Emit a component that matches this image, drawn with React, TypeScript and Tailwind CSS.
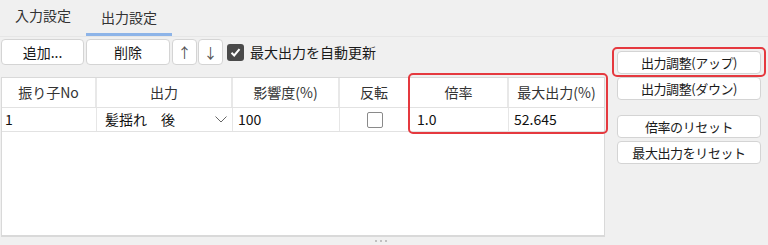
import React from 'react';

const font = { fontFamily: '"Noto Sans CJK JP", "Noto Sans", sans-serif' };

const columns = ['振り子No', '出力', '影響度(%)', '反転', '倍率', '最大出力(%)'];

function Btn({ label, className }: { label: string; className: string }) {
  return (
    <button
      className={`flex items-center justify-center rounded-[4px] border border-[#d4d4d4] bg-white text-[#1a1a1a] leading-none ${className}`}
    >
      {label}
    </button>
  );
}

export default function App() {
  return (
    <div
      className="relative flex h-[245px] w-[768px] flex-col overflow-hidden bg-[#f0f0f0] text-[#1a1a1a]"
      style={font}
    >
      {/* Tabs */}
      <div className="flex h-[37px] shrink-0 border-b border-[#e6e6e6]">
        <div className="flex w-[86px] items-center justify-center pb-[5px] text-[14px] text-[#333]">入力設定</div>
        <div className="flex w-[86px] flex-col">
          <div className="flex flex-1 items-center justify-center pt-[1px] text-[14px] text-[#333]">出力設定</div>
          <div className="h-[3px] bg-[#8db4e8]" />
        </div>
      </div>

      <div className="flex min-h-0 flex-1">
        {/* Left column */}
        <div className="flex w-[607px] flex-col">
          <div className="mt-[2px] flex h-[26px] items-center pl-[1px]">
            <Btn label="追加..." className="h-[26px] w-[83px] text-[14px]" />
            <Btn label="削除" className="ml-[2px] h-[26px] w-[84px] text-[14px]" />
            <Btn label="↑" className="ml-[2px] h-[26px] w-[25px] text-[14px] text-[#555]" />
            <Btn label="↓" className="ml-[1px] h-[26px] w-[25px] text-[14px] text-[#555]" />
            <div className="ml-[4px] flex h-[17px] w-[17px] items-center justify-center rounded-[3px] bg-[#4a4a4a]">
              <svg width="13" height="13" viewBox="0 0 13 13">
                <polyline points="2.5,6.8 5.2,9.5 10.5,3.2" fill="none" stroke="white" strokeWidth="2" />
              </svg>
            </div>
            <span className="ml-[6px] text-[14px] text-[#1a1a1a]">最大出力を自動更新</span>
          </div>

          {/* Table */}
          <div className="mt-[12px] ml-[1px] mr-[2px] flex flex-1 flex-col border-x border-t border-b-2 border-[#d9d9d9] bg-white">
            <div className="grid h-[30px] grid-cols-[95px_136px_107px_70px_99px_1fr] border-b border-[#e2e2e2]">
              {columns.map((c, i) => (
                <div
                  key={c}
                  className={`flex items-center justify-center text-[14px] text-[#333] ${i < 5 ? 'border-r-2 border-[#e8e8e8]' : ''}`}
                >
                  {c}
                </div>
              ))}
            </div>
            <div className="grid h-[24px] grid-cols-[95px_136px_107px_70px_99px_1fr] border-b border-[#e2e2e2] text-[14px] text-[#111]">
              <div className="flex items-center border-r border-[#e6e6e6] pl-[3px]">1</div>
              <div className="flex items-center justify-between border-r border-[#e6e6e6] pl-[8px] pr-[5px]">
                <span>髪揺れ　後</span>
                <svg width="12" height="7" viewBox="0 0 12 7">
                  <polyline points="0.5,0.5 6,6 11.5,0.5" fill="none" stroke="#666" strokeWidth="1" />
                </svg>
              </div>
              <div className="flex items-center border-r border-[#e6e6e6] pl-[5px]">100</div>
              <div className="flex items-center justify-center border-r border-[#e6e6e6]">
                <div className="h-[16px] w-[16px] rounded-[2px] border border-[#8a8a8a] bg-white" />
              </div>
              <div className="flex items-center border-r border-[#e6e6e6] pl-[7px]">1.0</div>
              <div className="flex items-center pl-[5px]">52.645</div>
            </div>
          </div>
        </div>

        {/* Right column */}
        <div className="flex flex-col pl-[10px] pt-[14px]">
          <Btn label="出力調整(アップ)" className="h-[23px] w-[144px] text-[13px] tracking-[-0.4px]" />
          <Btn label="出力調整(ダウン)" className="mt-[3px] h-[23px] w-[144px] text-[13px] tracking-[-0.4px]" />
          <Btn label="倍率のリセット" className="mt-[15px] h-[23px] w-[144px] text-[13px] tracking-[-0.4px]" />
          <Btn label="最大出力をリセット" className="mt-[3px] h-[23px] w-[144px] text-[13px] tracking-[-0.4px]" />
        </div>
      </div>

      {/* Splitter */}
      <div className="flex h-[8px] shrink-0 items-center justify-center gap-[3px] pr-[6px]">
        <div className="h-[2px] w-[2px] rounded-full bg-[#b0b0b0]" />
        <div className="h-[2px] w-[2px] rounded-full bg-[#b0b0b0]" />
        <div className="h-[2px] w-[2px] rounded-full bg-[#b0b0b0]" />
      </div>

      {/* Annotation frames */}
      <div className="absolute left-[408px] top-[73px] h-[61px] w-[200px] rounded-[5px] border-2 border-[#e5393f]" />
      <div className="absolute left-[612px] top-[47px] h-[30px] w-[154px] rounded-[5px] border-2 border-[#e5393f]" />
    </div>
  );
}
